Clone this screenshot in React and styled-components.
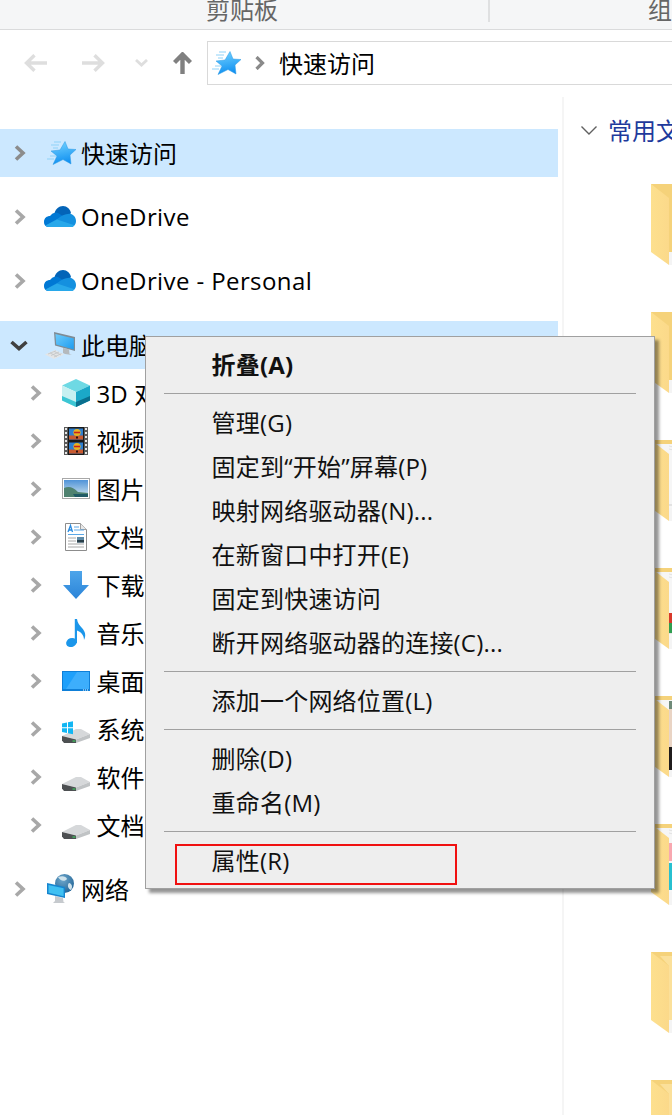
import React from "react";
import styled, { createGlobalStyle } from "styled-components";

const GlobalStyle = createGlobalStyle`
  html, body {
    margin: 0;
    padding: 0;
    background: #fff;
    height: 1115px;
    overflow: hidden;
  }
  body {
    font-family: "Open Sans", "Noto Sans CJK SC", sans-serif;
    color: #000;
  }
`;

const Window = styled.div`
  position: relative;
  width: 672px;
  height: 1115px;
  overflow: hidden;
`;

// ribbon
const Ribbon = styled.div`
  display: flex;
  height: 29px;
  background: #f5f6f7;
  border-bottom: 1px solid #dadbdc;
`;
const RibbonGroup = styled.div`
  flex: none;
  width: ${(props) => props.$width};
  height: 22px;
  line-height: 19px;
  font-size: 24px;
  color: #666;
  text-align: ${(props) => props.$align || "center"};
  padding: 0 ${(props) => props.$padRight || "0"} 0 ${(props) => props.$pad || "0"};
  box-sizing: border-box;
  border-right: ${(props) => (props.$last ? "none" : "2px solid #dfe0e1")};
  white-space: nowrap;
`;

// address bar
const AddressRow = styled.div`
  display: flex;
  align-items: center;
  height: 67px;
  padding: 0 0 2px 6px;
  box-sizing: border-box;
`;
const NavCell = styled.div`
  flex: none;
  display: flex;
  align-items: center;
  justify-content: center;
  width: ${(props) => props.$width};
`;
const AddressBox = styled.div`
  flex: 1;
  display: flex;
  align-items: center;
  height: 44px;
  margin-left: 3px;
  padding-left: 3px;
  box-sizing: border-box;
  border: 1px solid #d9d9d9;
  border-right: none;
  font-size: 24px;
`;
const Crumb = styled.span`
  display: flex;
  margin: 0 14px 0 14px;
`;
const CrumbLabel = styled.span`
  margin-top: -1px;
`;

// main area
const Main = styled.div`
  display: flex;
  height: 1018px;
`;
const Tree = styled.div`
  flex: none;
  width: 558px;
  padding-top: 32px;
  box-sizing: border-box;
`;
const TreeRow = styled.div`
  display: flex;
  align-items: center;
  height: 48px;
  padding-left: ${(props) => 10 + props.$level * 16}px;
  margin-top: ${(props) => props.$gap || 0}px;
  box-sizing: border-box;
  background: ${(props) => (props.$active ? "#cce8ff" : "transparent")};
  font-size: 24px;
  white-space: nowrap;
`;
const Toggle = styled.span`
  flex: none;
  display: flex;
  align-items: center;
  width: 34px;
  padding-left: ${(props) => (props.$open ? "0" : "4px")};
  box-sizing: border-box;
`;
const IconCell = styled.span`
  flex: none;
  display: flex;
  align-items: center;
  justify-content: flex-end;
  width: 32px;
  height: 32px;
`;
const RowLabel = styled.span`
  margin: -2px 0 0 ${(props) => (props.$level ? "4.6px" : "5px")};
  letter-spacing: ${(props) => (props.$latin ? "0.4px" : "0")};
`;

const Pane = styled.div`
  flex: none;
  width: 110px;
  margin-left: 4px;
  border-left: 2px solid #f5f5f5;
  padding: 20px 0 0 17px;
  box-sizing: border-box;
`;
const GroupHeader = styled.div`
  display: flex;
  align-items: center;
  gap: 11px;
  height: 26px;
  font-size: 24px;
  color: #1e3a9c;
  white-space: nowrap;
`;
const GroupTitle = styled.span`
  margin-top: -2px;
`;
const FolderList = styled.div`
  display: flex;
  flex-direction: column;
  gap: 47px;
  margin: 41px 0 0 70px;
`;
const FolderSvg = styled.svg`
  display: block;
  flex: none;
`;

// context menu
const Menu = styled.div`
  position: absolute;
  left: 145px;
  top: 336px;
  width: 510px;
  height: 553px;
  padding: 7px 0 4px;
  box-sizing: border-box;
  background: #eeeeee;
  border: 1px solid #a0a0a0;
  box-shadow: 4px 4px 3px rgba(0, 0, 0, 0.42);
`;
const MenuItem = styled.div`
  height: 44px;
  line-height: 42px;
  padding-left: 65.6px;
  font-size: 24px;
  letter-spacing: 0.2px;
  font-weight: ${(props) => (props.$bold ? 700 : 400)};
  color: #111;
  white-space: nowrap;
`;
const MenuSep = styled.div`
  height: 1px;
  margin: 5px 18px 8px;
  background: #a0a0a0;
`;
const RedBox = styled.div`
  position: absolute;
  left: 29px;
  top: 507px;
  width: 282px;
  height: 41px;
  box-sizing: border-box;
  border: 2px solid #f01010;
`;

// icons
const Chevron = ({ color = "#a8a8a8" }) => (
  <svg width="12" height="16" viewBox="0 0 12 16">
    <path d="M2 1.5 L9 8 L2 14.5" fill="none" stroke={color} strokeWidth="3.6" />
  </svg>
);
const ChevronDown = () => (
  <svg width="18" height="11" viewBox="0 0 18 11">
    <path d="M1.5 2 L9 8.5 L16.5 2" fill="none" stroke="#404040" strokeWidth="3.6" />
  </svg>
);

const ArrowLeft = () => (
  <svg width="23" height="18" viewBox="0 0 23 18">
    <path d="M10.5 1.2 L2.5 9 L10.5 16.8 M2.5 9 H23" fill="none" stroke="#dedede" strokeWidth="3.4" />
  </svg>
);
const ArrowRight = () => (
  <svg width="23" height="18" viewBox="0 0 23 18">
    <path d="M12.5 1.2 L20.5 9 L12.5 16.8 M20.5 9 H0" fill="none" stroke="#dedede" strokeWidth="3.4" />
  </svg>
);
const MiniDown = () => (
  <svg width="13" height="8" viewBox="0 0 13 8">
    <path d="M1 1 L6.5 6 L12 1" fill="none" stroke="#dedede" strokeWidth="2.8" />
  </svg>
);
const ArrowUp = () => (
  <svg width="19" height="22" viewBox="0 0 19 22">
    <path d="M9.5 22 V3 M1.5 10.5 L9.5 2.5 L17.5 10.5" fill="none" stroke="#808080" strokeWidth="4.4" />
  </svg>
);
const SmallChevron = () => (
  <svg width="10" height="14" viewBox="0 0 10 14">
    <path d="M1.5 1 L7.5 7 L1.5 13" fill="none" stroke="#8a8a8a" strokeWidth="3.2" />
  </svg>
);
const SectionChevron = () => (
  <svg width="16" height="9" viewBox="0 0 16 9" style={{ flex: "none" }}>
    <path d="M0.5 0.5 L8 8 L15.5 0.5" fill="none" stroke="#606060" strokeWidth="1.4" />
  </svg>
);

const StarIcon = ({ id }) => (
  <svg width="30" height="24" viewBox="0 0 30 24" style={{ flex: "none" }}>
    <defs>
      <linearGradient id={id} x1="0.4" y1="0" x2="0.6" y2="1">
        <stop offset="0" stopColor="#6fd0ff" />
        <stop offset="1" stopColor="#0a8cf0" />
      </linearGradient>
    </defs>
    <path d="M19 0.5 L22 8 L30 8.5 L24 14 L25 23 L17 18.5 L7 23.5 L11 15 L5 10 L14 9 Z" fill={`url(#${id})`} stroke="#2a98e4" strokeWidth="0.5" />
    <path d="M8 1 H15 M5 4 H13 M7 7 H12 M4 15 H10 M1 18 H8" stroke="#8fd2f8" strokeWidth="1" />
  </svg>
);

const CloudIcon = () => (
  <svg width="32" height="32" viewBox="0 0 32 32">
    <path d="M10 14 C11 8 15 5 19 5 C23 5 26 8 27 12 L20 20 Z" fill="#0364b8" />
    <path d="M5 26 C1 26 0 23 0 21 C0 17 3 15 6 15 C8 12 11 11 14 12 L22 17 L12 26 Z" fill="#0078d4" />
    <path d="M5 26 C3.5 26 2 25.4 1.5 24.6 L14 17.5 C17 15 21 12.6 26 12.8 C29 13.5 32 16 32 20 C32 24 29 26 27 26 Z" fill="#1490df" />
    <path d="M5 26 C3.5 26 2 25.4 1.5 24.6 L13 18.5 L30.5 24.2 C29.6 25.5 28 26 27 26 Z" fill="#28a8ea" />
  </svg>
);

const ComputerIcon = () => (
  <svg width="32" height="32" viewBox="0 0 32 32">
    <defs>
      <linearGradient id="pcScreen" x1="0" y1="0" x2="1" y2="1">
        <stop offset="0" stopColor="#6ecbfb" />
        <stop offset="1" stopColor="#1d9cf0" />
      </linearGradient>
    </defs>
    <path d="M19 19 L25 20.5 L25.5 25 L28 26 L21 25 L19 24 Z" fill="#b4b9bd" />
    <path d="M10 3 L31 8 L31 22 L11 16.5 Z" fill="#7f8b94" />
    <path d="M11.4 5 L29.8 9.4 L29.8 20.4 L12.2 15.6 Z" fill="url(#pcScreen)" />
    <path d="M1 25.5 L11 21 L20 25.5 L10 30 Z" fill="#e4e5e6" />
    <path d="M4 25 L12 21.8 M7 26.5 L15 23 M10 28 L17.5 24.6 M6 23.8 L13 27.5 M10 22.4 L17 26" stroke="#c2c5c7" strokeWidth="0.8" />
  </svg>
);

const CubeIcon = () => (
  <svg width="32" height="32" viewBox="0 0 32 32">
    <path d="M16 2 L30 8.5 L16 15 L2 8.5 Z" fill="#6ed9e4" />
    <path d="M2 8.5 L16 15 V30 L2 23.5 Z" fill="#c6f0f1" />
    <path d="M2 19 L16 25 V30 L2 23.5 Z" fill="#3cc6d4" />
    <path d="M30 8.5 L16 15 V30 L30 23.5 Z" fill="#1ba8c8" />
    <path d="M30 19 L16 25 V30 L30 23.5 Z" fill="#0a6f8e" />
  </svg>
);

const FilmFrame = ({ y }) => (
  <g>
    <rect x="9" y={y} width="14" height="11" fill="#2f7fd0" />
    <rect x="9" y={y + 7} width="14" height="4" fill="#c85a30" />
    <circle cx="17" cy={y + 4} r="3.6" fill="#e8b520" />
    <path d={`M14 ${y + 4} H20`} stroke="#c82020" strokeWidth="1.6" />
    <rect x="16" y={y + 8} width="2" height="2" fill="#301010" />
  </g>
);
const FilmIcon = () => (
  <svg width="32" height="32" viewBox="0 0 32 32">
    <rect x="4" y="2" width="24" height="28" fill="#5a5a5a" />
    <path d="M6 3 V29 M26 3 V29" stroke="#e6e6e6" strokeWidth="2" strokeDasharray="2 2" />
    <rect x="8" y="2" width="16" height="28" fill="#1a1a1a" />
    <FilmFrame y={3.5} />
    <FilmFrame y={17.5} />
  </svg>
);

const PictureIcon = () => (
  <svg width="32" height="32" viewBox="0 0 32 32">
    <defs>
      <linearGradient id="picSky" x1="0" y1="0" x2="0" y2="1">
        <stop offset="0" stopColor="#4f93d8" />
        <stop offset="1" stopColor="#d3e6ee" />
      </linearGradient>
    </defs>
    <rect x="2.5" y="5.5" width="27" height="20" fill="#fff" stroke="#a8a8a8" />
    <rect x="4" y="7" width="24" height="17" fill="url(#picSky)" />
    <path d="M4 15 C9 13 13 14 18 19 L28 20 V24 H4 Z" fill="#4f8270" />
    <path d="M13 21 H28 V24 H15 Z" fill="#1f5a66" />
  </svg>
);

const DocIcon = () => (
  <svg width="32" height="32" viewBox="0 0 32 32">
    <path d="M5.5 2.5 H20.5 L26.5 8.5 V29.5 H5.5 Z" fill="#fff" stroke="#8c8c8c" />
    <path d="M20.5 2.5 V8.5 H26.5" fill="#e8e8e8" stroke="#a0a0a0" />
    <path d="M8 11 L10.5 4.5 L12.5 11 M9 9 H12" fill="none" stroke="#2a8be0" strokeWidth="1.3" />
    <path d="M14 6 H19 M14 9 H24 M8 13.5 H24" stroke="#5aa8e8" strokeWidth="1" />
    <path d="M8 17 H16 M8 20 H16 M8 23 H24 M8 26 H24" stroke="#a8a8a8" strokeWidth="1" />
    <rect x="17" y="16" width="7" height="5.5" fill="#5d8aa8" />
    <rect x="17" y="19" width="7" height="2.5" fill="#2a3f4a" />
  </svg>
);

const DownIcon = () => (
  <svg width="32" height="32" viewBox="0 0 32 32">
    <defs>
      <linearGradient id="dlArrow" x1="0" y1="0" x2="0" y2="1">
        <stop offset="0" stopColor="#4ea5ea" />
        <stop offset="1" stopColor="#2b84d8" />
      </linearGradient>
    </defs>
    <path d="M10 2 H22 V16 H29 L16 30 L3 16 H10 Z" fill="url(#dlArrow)" />
  </svg>
);

const MusicIcon = () => (
  <svg width="32" height="32" viewBox="0 0 32 32">
    <ellipse cx="11.5" cy="25.5" rx="5.5" ry="4.4" transform="rotate(-20 11.5 25.5)" fill="#1b96ea" />
    <path d="M14.8 2 H17 C17.5 6 19.5 8 22 11 C25 14.5 26.5 18 24 23 C24 18.5 21.5 15 17 13.5 V26 H14.8 Z" fill="#1b96ea" />
  </svg>
);

const DesktopIcon = () => (
  <svg width="32" height="32" viewBox="0 0 32 32">
    <rect x="2" y="6" width="28" height="20" fill="#0e7fd8" />
    <rect x="3" y="7" width="26" height="17" fill="#1ea0fb" />
    <path d="M17 7 H29 V24 H6 Z" fill="#3daefc" />
    <path d="M23 25 H24 M25 25 H26 M27 25 H28" stroke="#fff" strokeWidth="1" />
  </svg>
);

const DriveShape = () => (
  <g>
    <path d="M2 23 L16 16 H21 L30 21 L16 26.5 Z" fill="#d6d8da" />
    <path d="M16 26.5 L30 21 V25 L16 30 Z" fill="#c0c3c5" />
    <path d="M2 23 L16 26.5 V30 H4 L2 27.5 Z" fill="#4d5052" />
    <rect x="12.5" y="27.4" width="3" height="1.3" fill="#3fbf5f" />
  </g>
);
const DriveIcon = () => (
  <svg width="32" height="32" viewBox="0 0 32 32">
    <DriveShape />
  </svg>
);
const SystemDriveIcon = () => (
  <svg width="32" height="32" viewBox="0 0 32 32">
    <DriveShape />
    <path d="M2 10.4 L7 9.4 V14.2 H2 Z M8 9.2 L13 8.2 V14.2 H8 Z M2 15.2 H7 V20 L2 19 Z M8 15.2 H13 V21.2 L8 20.2 Z" fill="#12b6f3" />
  </svg>
);

const NetworkIcon = () => (
  <svg width="32" height="32" viewBox="0 0 32 32">
    <defs>
      <radialGradient id="netGlobe" cx="0.4" cy="0.3" r="0.8">
        <stop offset="0" stopColor="#6fa8cc" />
        <stop offset="1" stopColor="#1c5f92" />
      </radialGradient>
    </defs>
    <circle cx="20.5" cy="10.5" r="9.5" fill="url(#netGlobe)" />
    <path d="M14 4 C18 2.5 22 3 23 6 C21 9 16 8 14 4 Z M25 10 C28 10.5 29 14 27 17 C24 16 23 12 25 10 Z" fill="#cfe3ec" />
    <path d="M11 23 L19 25 L19.5 29 L21 30 H9 L11 28 Z" fill="#c6cace" />
    <path d="M3 10 L21 14 V25 L3 21 Z" fill="#1685cf" />
    <path d="M4.5 12 L19.6 15.3 V23.2 L4.5 19.8 Z" fill="#3fc0f2" />
  </svg>
);

// folders in the content pane
const FolderPaper = () => (
  <g>
    <path d="M0 4 H30 V68 H0 Z" fill="#f6f6f6" />
    <path d="M18 6 L30 9 M18 9 L30 12" stroke="#e2e2e2" strokeWidth="1" />
    <path d="M18 65 H30" stroke="#cfcfcf" strokeWidth="1" />
  </g>
);

const FOLDER_FILLS = {
  chrome: (
    <g>
      <rect x="18" y="45" width="6" height="10" fill="#d8382a" />
      <rect x="18" y="55" width="6" height="10" fill="#2f9e50" />
    </g>
  ),
  photo: (
    <g>
      <rect x="18" y="5" width="12" height="8" fill="#6f8a78" />
      <rect x="18" y="13" width="12" height="38" fill="#e9d4c4" />
      <rect x="18" y="51" width="12" height="23" fill="#201c1c" />
    </g>
  ),
  poster: (
    <g>
      <rect x="18" y="19" width="12" height="18" fill="#f8a8b0" />
      <rect x="18" y="39" width="12" height="27" fill="#27c0d0" />
    </g>
  ),
};

const Folder = ({ id, kind }) => {
  const paper = ["paper", "chrome", "photo", "poster"].includes(kind);
  return (
    <FolderSvg width="30" height="81" viewBox="0 0 30 81">
      <defs>
        <linearGradient id={id} x1="0" y1="0" x2="1" y2="0">
          <stop offset="0" stopColor="#fde08e" />
          <stop offset="1" stopColor="#fbd98a" />
        </linearGradient>
      </defs>
      <path d="M18 68 H30 V81 H18 Z" fill="#f4f4f4" />
      <path d="M0 0 H30 V68 H0 Z" fill="#f5d27a" />
      {paper && <FolderPaper />}
      {FOLDER_FILLS[kind]}
      {kind === "double" && <path d="M9 4 H30 V68 H18 V14 Z" fill="#fbe09a" />}
      <path d="M0 0 L18 14 V81 L0 68 Z" fill={`url(#${id})`} />
    </FolderSvg>
  );
};

const TREE = [
  { id: "quick", level: 0, label: "快速访问", icon: <StarIcon id="starTree" />, active: true, hot: true },
  { id: "od1", level: 0, label: "OneDrive", icon: <CloudIcon />, gap: 16, latin: true },
  { id: "od2", level: 0, label: "OneDrive - Personal", icon: <CloudIcon />, gap: 16, latin: true },
  { id: "pc", level: 0, label: "此电脑", icon: <ComputerIcon />, active: true, open: true, gap: 16 },
  { id: "3d", level: 1, label: "3D 对象", icon: <CubeIcon /> },
  { id: "video", level: 1, label: "视频", icon: <FilmIcon /> },
  { id: "pic", level: 1, label: "图片", icon: <PictureIcon /> },
  { id: "doc", level: 1, label: "文档", icon: <DocIcon /> },
  { id: "dl", level: 1, label: "下载", icon: <DownIcon /> },
  { id: "music", level: 1, label: "音乐", icon: <MusicIcon /> },
  { id: "desk", level: 1, label: "桌面", icon: <DesktopIcon /> },
  { id: "sys", level: 1, label: "系统 (C:)", icon: <SystemDriveIcon /> },
  { id: "soft", level: 1, label: "软件 (D:)", icon: <DriveIcon /> },
  { id: "docs", level: 1, label: "文档 (E:)", icon: <DriveIcon /> },
  { id: "net", level: 0, label: "网络", icon: <NetworkIcon />, gap: 16 },
];

const MENU = [
  { label: "折叠(A)", bold: true },
  null,
  { label: "管理(G)" },
  { label: "固定到“开始”屏幕(P)" },
  { label: "映射网络驱动器(N)..." },
  { label: "在新窗口中打开(E)" },
  { label: "固定到快速访问" },
  { label: "断开网络驱动器的连接(C)..." },
  null,
  { label: "添加一个网络位置(L)" },
  null,
  { label: "删除(D)" },
  { label: "重命名(M)" },
  null,
  { label: "属性(R)" },
];

const FOLDERS = ["plain", "plain", "paper", "chrome", "photo", "poster", "double", "double"];

export default function App() {
  return (
    <Window>
      <GlobalStyle />
      <Ribbon>
        <RibbonGroup $width="490px" $padRight="4px">剪贴板</RibbonGroup>
        <RibbonGroup $width="182px" $align="left" $pad="158px" $last>
          组织
        </RibbonGroup>
      </Ribbon>
      <AddressRow>
        <NavCell $width="58px"><ArrowLeft /></NavCell>
        <NavCell $width="58px"><ArrowRight /></NavCell>
        <NavCell $width="38px"><MiniDown /></NavCell>
        <NavCell $width="44px"><ArrowUp /></NavCell>
        <AddressBox>
          <StarIcon id="starBar" />
          <Crumb><SmallChevron /></Crumb>
          <CrumbLabel>快速访问</CrumbLabel>
        </AddressBox>
      </AddressRow>
      <Main>
        <Tree>
          {TREE.map((row) => (
            <TreeRow key={row.id} $level={row.level} $active={row.active} $gap={row.gap}>
              <Toggle $open={row.open}>
                {row.open ? <ChevronDown /> : <Chevron color={row.hot ? "#8c8c8c" : "#a8a8a8"} />}
              </Toggle>
              <IconCell>{row.icon}</IconCell>
              <RowLabel $level={row.level} $latin={row.latin}>{row.label}</RowLabel>
            </TreeRow>
          ))}
        </Tree>
        <Pane>
          <GroupHeader>
            <SectionChevron />
            <GroupTitle>常用文件夹</GroupTitle>
          </GroupHeader>
          <FolderList>
            {FOLDERS.map((kind, i) => (
              <Folder key={i} id={`folder${i}`} kind={kind} />
            ))}
          </FolderList>
        </Pane>
      </Main>
      <Menu>
        {MENU.map((item, i) =>
          item ? (
            <MenuItem key={i} $bold={item.bold}>
              {item.label}
            </MenuItem>
          ) : (
            <MenuSep key={i} />
          )
        )}
        <RedBox />
      </Menu>
    </Window>
  );
}
